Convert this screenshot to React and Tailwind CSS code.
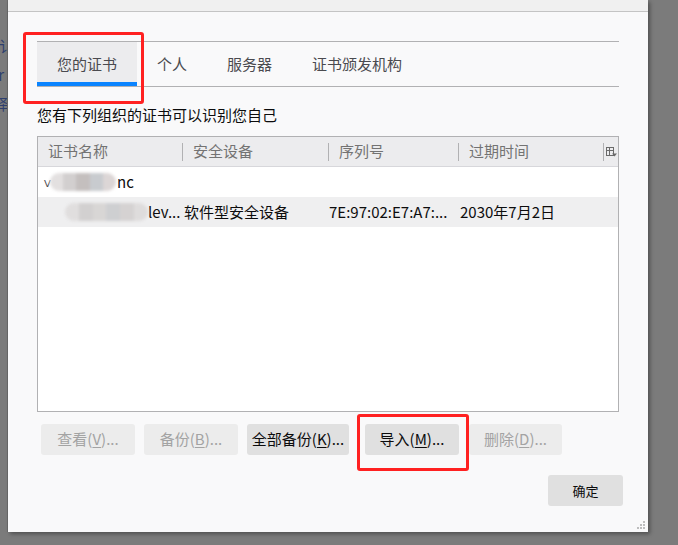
const font = { fontFamily: '"Noto Sans CJK SC", "Noto Sans", sans-serif' };

const Blur = ({ w, colors }) => (
  <div className="flex h-[18px] overflow-hidden rounded-full blur-[1.5px]" style={{ width: w }}>
    {colors.map((c, i) => (
      <div key={i} className="flex-1 h-full" style={{ background: c }} />
    ))}
  </div>
);

const Btn = ({ label, k, rest, className, disabled }) => (
  <button
    className={`h-[31px] rounded-[3px] text-[15px] flex items-center justify-center ${
      disabled ? 'bg-[#ececec] text-[#a3a3a3]' : 'bg-[#e0e0e0] text-[#0c0c0d]'
    } ${className}`}
  >
    {label}(<span className="underline underline-offset-2">{k}</span>){rest}
  </button>
);

export default function App() {
  const tabs = ['个人', '服务器', '证书颁发机构'];
  return (
    <div className="w-[678px] h-[545px] bg-[#7b7b7b] flex overflow-hidden relative" style={font}>
      {/* page behind overlay */}
      <div className="w-[8px] shrink-0 h-[532px] border-r border-[#6a6a6a] overflow-hidden text-[15px] text-[#2e3f6e] leading-none">
        <div className="mt-[38px] -ml-[1px]">讠</div>
        <div className="mt-[14px] -ml-[6px]">ir</div>
        <div className="mt-[14px] -ml-[6px]">泽</div>
      </div>

      {/* dialog */}
      <div className="w-[640px] h-[532px] shrink-0 bg-[#f9f9fa] flex flex-col shadow-[2px_2px_4px_rgba(0,0,0,0.35)] relative">
        <div className="h-[12px] bg-[#f0f0f0] border-b border-[#c4c4c4] shrink-0" />
        <div className="px-[29px] flex flex-col">
          {/* tabs */}
          <div className="mt-[29px] h-[46px] border-y border-[#b1b1b3] flex text-[15px] text-[#4a4a4f]">
            <div className="w-[100px] bg-[#ececee] flex flex-col">
              <div className="flex-1 flex items-center justify-center pt-[4px]">您的证书</div>
              <div className="h-[4px] bg-[#0a84ff]" />
            </div>
            {tabs.map(t => (
              <div key={t} className="px-[20px] flex items-center pt-[1px]">{t}</div>
            ))}
          </div>

          <div className="mt-[18px] text-[15px] text-[#0c0c0d] leading-[20px]">您有下列组织的证书可以识别您自己</div>

          {/* tree table */}
          <div className="mt-[11px] h-[276px] border border-[#b1b1b3] bg-white flex flex-col text-[15px]">
            <div className="h-[30px] bg-[#ececee] border-b border-[#d7d7db] flex items-center text-[#737373] shrink-0">
              <div className="w-[145px] pl-[10px] border-r border-[#b1b1b3] h-[18px] flex items-center">证书名称</div>
              <div className="w-[146px] pl-[10px] border-r border-[#b1b1b3] h-[18px] flex items-center">安全设备</div>
              <div className="w-[130px] pl-[10px] border-r border-[#b1b1b3] h-[18px] flex items-center">序列号</div>
              <div className="w-[145px] pl-[10px] border-r border-[#b1b1b3] h-[18px] flex items-center">过期时间</div>
              <div className="flex-1 flex items-center justify-center">
                <svg width="11" height="10" viewBox="0 0 11 10" fill="none" stroke="#6a6a6a" strokeWidth="1">
                  <rect x="0.5" y="0.5" width="7" height="8" />
                  <line x1="0.5" y1="3.5" x2="7.5" y2="3.5" />
                  <line x1="3.5" y1="0.5" x2="3.5" y2="8.5" />
                  <path d="M6 6.5h5l-2.5 3z" fill="#6a6a6a" stroke="none" />
                </svg>
              </div>
            </div>
            <div className="h-[30px] flex items-center text-[#0c0c0d]">
              <span className="ml-[6px] w-[6px] text-[10px] text-[#4a4a4f]">ᐯ</span>
              <Blur w="66px" colors={['#e3e0e0', '#d2cfcf', '#c4bfbe', '#c8cbcf', '#dcd6d6']} />
              <span className="ml-[1px]">nc</span>
            </div>
            <div className="h-[30px] flex items-center bg-[#efeff0] text-[#0c0c0d]">
              <div className="w-[146px] flex items-center pl-[27px]">
                <Blur w="83px" colors={['#e0dede', '#d2d0d0', '#d8d6d5', '#cecfd1', '#d5d2d2', '#dedcdc']} />
                <span>lev...</span>
              </div>
              <div className="w-[145px]">软件型安全设备</div>
              <div className="w-[131px]">7E:97:02:E7:A7:...</div>
              <div>2030年7月2日</div>
            </div>
          </div>

          {/* buttons */}
          <div className="mt-[12px] flex gap-[9px] pl-[4px]">
            <Btn label="查看" k="V" rest="..." className="w-[94px]" disabled />
            <Btn label="备份" k="B" rest="..." className="w-[94px]" disabled />
            <Btn label="全部备份" k="K" rest="..." className="w-[102px]" />
            <Btn label="导入" k="M" rest="..." className="w-[94px] ml-[7px]" />
            <Btn label="删除" k="D" rest="..." className="w-[93px] ml-[1px]" disabled />
          </div>

          <div className="mt-[20px] flex justify-end">
            <button className="w-[75px] h-[31px] mr-[-4px] rounded-[3px] bg-[#e0e0e0] text-[13px] text-[#0c0c0d]">确定</button>
          </div>
        </div>

        {/* resize grip */}
        <svg className="absolute right-[2px] bottom-[2px]" width="10" height="10" viewBox="0 0 10 10" fill="#bdbdbd">
          <rect x="7" y="1" width="2" height="2" />
          <rect x="4" y="4" width="2" height="2" />
          <rect x="7" y="4" width="2" height="2" />
          <rect x="1" y="7" width="2" height="2" />
          <rect x="4" y="7" width="2" height="2" />
          <rect x="7" y="7" width="2" height="2" />
        </svg>
      </div>

      {/* annotation boxes */}
      <div className="absolute left-[23px] top-[32px] w-[121px] h-[72px] border-[3px] border-[#ff2121] rounded-[3px]" />
      <div className="absolute left-[357px] top-[414px] w-[112px] h-[57px] border-[3px] border-[#ff2121] rounded-[3px]" />
    </div>
  );
}
